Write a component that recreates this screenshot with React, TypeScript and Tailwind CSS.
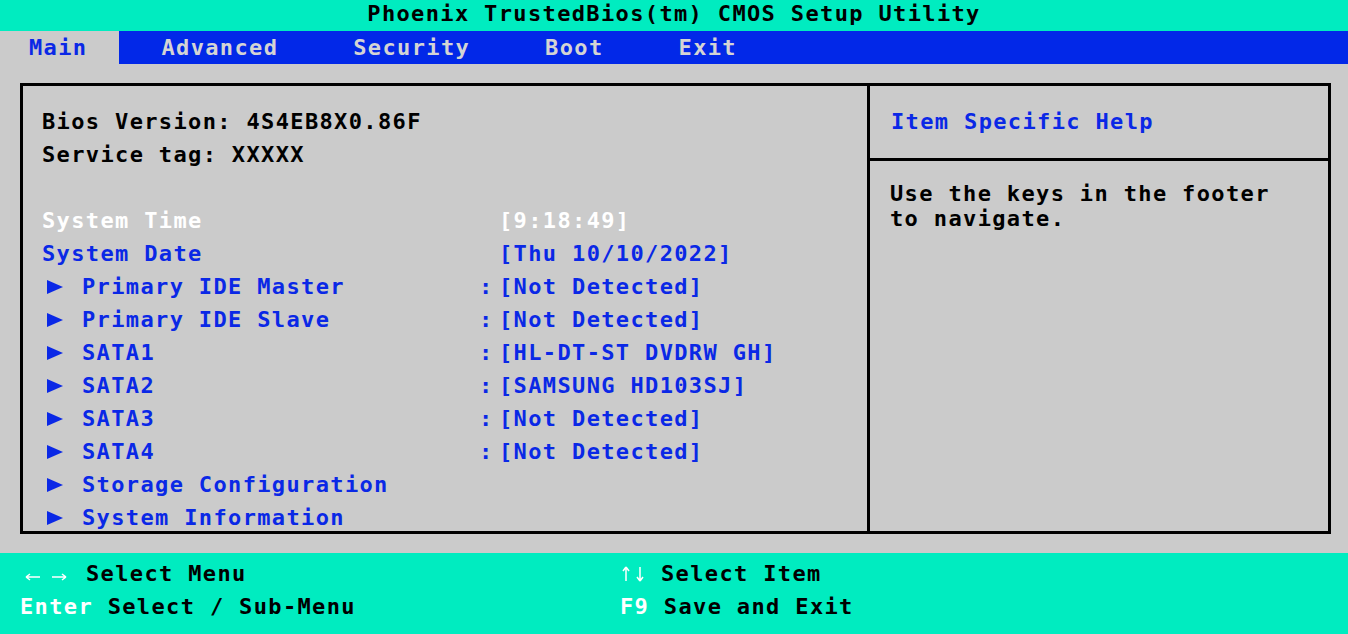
import React from 'react';

const tabs = ['Advanced', 'Security', 'Boot', 'Exit'];

const items = [
  { label: 'Primary IDE Master', value: '[Not Detected]' },
  { label: 'Primary IDE Slave', value: '[Not Detected]' },
  { label: 'SATA1', value: '[HL-DT-ST DVDRW GH]' },
  { label: 'SATA2', value: '[SAMSUNG HD103SJ]' },
  { label: 'SATA3', value: '[Not Detected]' },
  { label: 'SATA4', value: '[Not Detected]' },
  { label: 'Storage Configuration', value: '' },
  { label: 'System Information', value: '' },
];

const Arrow: React.FC = () => (
  <svg width="16" height="14" viewBox="0 0 16 14" className="ml-[5px] mr-[19px] shrink-0">
    <polygon points="0,0 16,7 0,14" fill="#0a28e6" />
  </svg>
);

const Row: React.FC<{ label: string; value?: string; colon?: boolean; color: string; arrow?: boolean }> = ({
  label,
  value,
  colon,
  color,
  arrow,
}) => (
  <div className={`flex h-[33px] items-center ${color}`}>
    <div className="flex w-[442px] items-center">
      {arrow && <Arrow />}
      <span className="whitespace-pre">{label}</span>
    </div>
    {value && (
      <>
        <span className="-ml-[5px] w-[20px]">{colon ? ':' : ''}</span>
        <span className="whitespace-pre">{value}</span>
      </>
    )}
  </div>
);

const App: React.FC = () => {
  return (
    <div className="flex h-[634px] w-[1348px] flex-col overflow-hidden bg-[#cbcbcb] font-['DejaVu_Sans_Mono',monospace] text-[22px] font-bold tracking-[1.36px]">
      {/* title */}
      <div className="flex h-[31px] shrink-0 items-center justify-center bg-[#00ecc0] pb-[3px] text-black leading-none">
        Phoenix TrustedBios(tm) CMOS Setup Utility
      </div>

      {/* menu bar */}
      <div className="flex h-[33px] shrink-0 items-center bg-[#0228e8] leading-none">
        <div className="flex h-full items-center bg-[#cbcbcb] pl-[29px] pr-[32px] text-[#0a28e6]">Main</div>
        <div className="flex gap-[75px] pl-[42px] text-[#d4d4d4]">
          {tabs.map(t => (
            <span key={t}>{t}</span>
          ))}
        </div>
      </div>

      {/* body */}
      <div className="flex-1 pl-[20px] pt-[19px]">
        <div className="flex h-[451px] w-[1311px] border-[3px] border-black">
          <div className="w-[847px] shrink-0 overflow-hidden border-r-[3px] border-black pl-[19px] pt-[19px] leading-none">
            <Row label="Bios Version: 4S4EB8X0.86F" color="text-black" />
            <Row label="Service tag: XXXXX" color="text-black" />
            <div className="h-[33px]" />
            <Row label="System Time" value="[9:18:49]" color="text-white" />
            <Row label="System Date" value="[Thu 10/10/2022]" color="text-[#0a28e6]" />
            {items.map(i => (
              <Row key={i.label} label={i.label} value={i.value} colon color="text-[#0a28e6]" arrow />
            ))}
          </div>
          <div className="flex flex-1 flex-col">
            <div className="flex h-[75px] shrink-0 items-center border-b-[3px] border-black pl-[21px] text-[#0a28e6] leading-none">
              Item Specific Help
            </div>
            <div className="pl-[20px] pt-[20px] leading-[25px] text-black">
              Use the keys in the footer
              <br />
              to navigate.
            </div>
          </div>
        </div>
      </div>

      {/* footer */}
      <div className="flex h-[81px] shrink-0 bg-[#00ecc0] px-[20px] pt-[4px] leading-none text-black">
        <div className="w-[600px]">
          <div className="flex h-[33px] items-center">
            <span className="flex w-[66px] items-center pt-[6px]">
              <svg width="16" height="8" viewBox="0 0 16 8" className="ml-[5px]" fill="none" stroke="white" strokeWidth="1.5">
                <path d="M1 4H15M1 4L5 1M1 4L5 7" />
              </svg>
              <svg width="16" height="8" viewBox="0 0 16 8" className="ml-[10px]" fill="none" stroke="white" strokeWidth="1.5">
                <path d="M1 4H15M15 4L11 1M15 4L11 7" />
              </svg>
            </span>
            <span>Select Menu</span>
          </div>
          <div className="flex h-[33px] items-center">
            <span className="whitespace-pre text-white">Enter </span>
            <span>Select / Sub-Menu</span>
          </div>
        </div>
        <div>
          <div className="flex h-[33px] items-center">
            <span className="flex w-[41px] items-center">
              <svg width="8" height="16" viewBox="0 0 8 16" className="ml-[2px]" fill="none" stroke="white" strokeWidth="1.5">
                <path d="M4 1V15M4 1L1 5M4 1L7 5" />
              </svg>
              <svg width="8" height="16" viewBox="0 0 8 16" className="ml-[6px]" fill="none" stroke="white" strokeWidth="1.5">
                <path d="M4 1V15M4 15L1 11M4 15L7 11" />
              </svg>
            </span>
            <span>Select Item</span>
          </div>
          <div className="flex h-[33px] items-center">
            <span className="whitespace-pre text-white">F9 </span>
            <span>Save and Exit</span>
          </div>
        </div>
      </div>
    </div>
  );
};

export default App;
